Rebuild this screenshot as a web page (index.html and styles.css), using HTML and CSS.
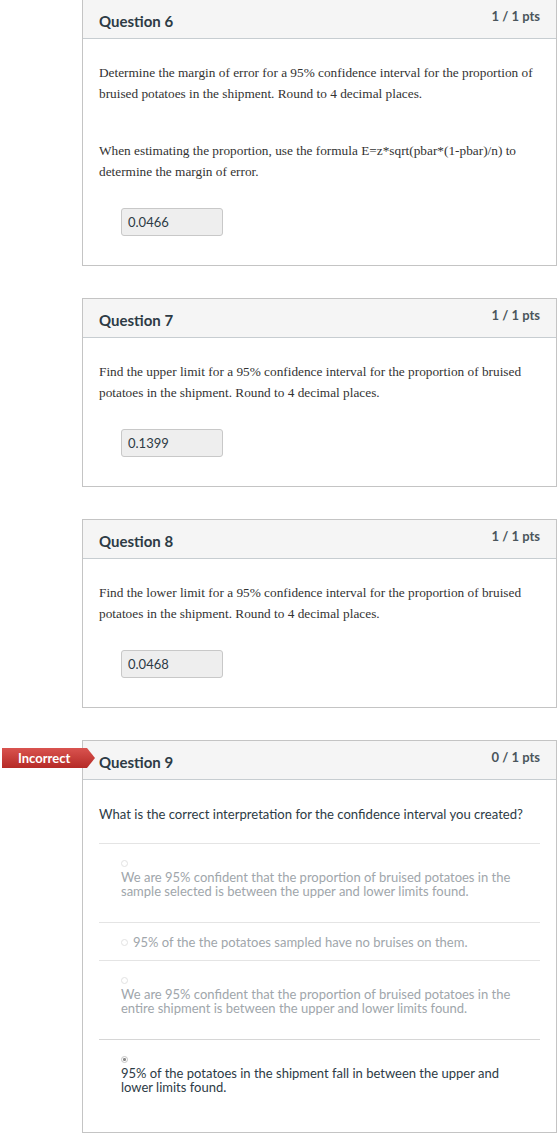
FILE: index.html
```html
<!DOCTYPE html>
<html lang="en">
<head>
    <meta charset="UTF-8">
    <title>Quiz results</title>
    <link rel="stylesheet" href="styles.css">
</head>
<body>
<div class="quiz">
    <div class="question">
        <div class="q-header">
            <span class="q-name">Question 6</span>
            <span class="q-pts">1 / 1 pts</span>
        </div>
        <div class="q-body">
            <p class="q-text">Determine the margin of error for a 95% confidence interval for the proportion of bruised potatoes in the shipment. Round to 4 decimal places.</p>
            <p class="q-text">When estimating the proportion, use the formula E=z*sqrt(pbar*(1-pbar)/n) to determine the margin of error.</p>
            <div class="answer-field">0.0466</div>
        </div>
    </div>

    <div class="question">
        <div class="q-header">
            <span class="q-name">Question 7</span>
            <span class="q-pts">1 / 1 pts</span>
        </div>
        <div class="q-body">
            <p class="q-text">Find the upper limit for a 95% confidence interval for the proportion of bruised potatoes in the shipment. Round to 4 decimal places.</p>
            <div class="answer-field">0.1399</div>
        </div>
    </div>

    <div class="question">
        <div class="q-header">
            <span class="q-name">Question 8</span>
            <span class="q-pts">1 / 1 pts</span>
        </div>
        <div class="q-body">
            <p class="q-text">Find the lower limit for a 95% confidence interval for the proportion of bruised potatoes in the shipment. Round to 4 decimal places.</p>
            <div class="answer-field">0.0468</div>
        </div>
    </div>

    <div class="question">
        <div class="badge">Incorrect</div>
        <div class="q-header">
            <span class="q-name">Question 9</span>
            <span class="q-pts">0 / 1 pts</span>
        </div>
        <div class="q-body">
            <p class="q-plain">What is the correct interpretation for the confidence interval you created?</p>
            <div class="answers">
                <div class="answer"><span class="radio"></span><span class="answer-text">We are 95% confident that the proportion of bruised potatoes in the sample selected is between the upper and lower limits found.</span></div>
                <div class="answer short"><span class="radio"></span><span class="answer-text">95% of the the potatoes sampled have no bruises on them.</span></div>
                <div class="answer"><span class="radio"></span><span class="answer-text">We are 95% confident that the proportion of bruised potatoes in the entire shipment is between the upper and lower limits found.</span></div>
                <div class="answer selected"><span class="radio"></span><span class="answer-text">95% of the potatoes in the shipment fall in between the upper and lower limits found.</span></div>
            </div>
        </div>
    </div>
</div>
</body>
</html>
```

FILE: styles.css
```css
* {
    margin: 0;
    padding: 0;
    box-sizing: border-box;
}

body {
    background: #fff;
    font-family: Lato, "Open Sans", sans-serif;
    color: #2d3b45;
}

.quiz {
    width: 557px;
    padding-left: 82px;
    margin-top: -1px;
}

.question {
    position: relative;
    border: 1px solid #c4c4c4;
    margin-bottom: 32px;
}

.q-header {
    display: flex;
    justify-content: space-between;
    align-items: flex-start;
    height: 39px;
    padding: 0 16px;
    background: #f5f5f5;
    border-bottom: 1px solid #c7cdd1;
}

.q-name {
    margin-top: 11px;
    font-size: 15px;
    font-weight: 700;
    line-height: 20px;
}

.q-pts {
    margin-top: 8px;
    font-size: 13px;
    font-weight: 700;
    line-height: 16px;
    color: #4b555c;
}

.q-body {
    padding: 23px 16px 29px;
}

.q-text {
    font-family: "Liberation Serif", "Times New Roman", serif;
    font-size: 13.3px;
    line-height: 21px;
    color: #333;
    margin-bottom: 36px;
}

.q-text:last-of-type {
    margin-bottom: 26px;
}

.answer-field {
    width: 102px;
    height: 28px;
    margin-left: 22px;
    padding-left: 6px;
    background: #eeeeee;
    border: 1px solid #c8c8c8;
    border-radius: 3px;
    font-size: 13px;
    line-height: 26px;
    color: #2d3b45;
}

/* multiple choice */
.q-plain {
    font-size: 13.1px;
    line-height: 20px;
    margin-top: 1px;
    margin-bottom: 19px;
}

.answers {
    margin-bottom: -15px;
}

.answer {
    border-top: 1px solid #e4e4e4;
    padding: 12px 13px 11px 22px;
    font-size: 13px;
    line-height: 14px;
    color: #a0a6ab;
}

.radio {
    display: inline-block;
    width: 7px;
    height: 7px;
    margin-right: 5px;
    border: 1px solid #e2e2e2;
    border-radius: 50%;
    vertical-align: middle;
    position: relative;
    top: -1px;
}

.answer-text {
    display: inline-block;
    max-width: 400px;
    vertical-align: top;
    margin-bottom: 13px;
}

.answer.short .answer-text {
    margin-bottom: 0;
}

.answer.selected {
    color: #2d3b45;
    border-top-color: #d6d6d6;
}

.answer.selected .radio {
    border-color: #c4c4c4;
    background: radial-gradient(circle, #8a8a8a 0, #8a8a8a 1.2px, #fff 1.8px);
}

/* incorrect marker */
.badge {
    position: absolute;
    left: -81px;
    top: 7px;
    width: 93px;
    height: 20px;
    padding-left: 16px;
    font-size: 13px;
    font-weight: 700;
    line-height: 20px;
    color: #fff;
    background: linear-gradient(#d9534f, #b52a26);
    clip-path: polygon(0 0, 85px 0, 93px 50%, 85px 100%, 0 100%);
}
```
